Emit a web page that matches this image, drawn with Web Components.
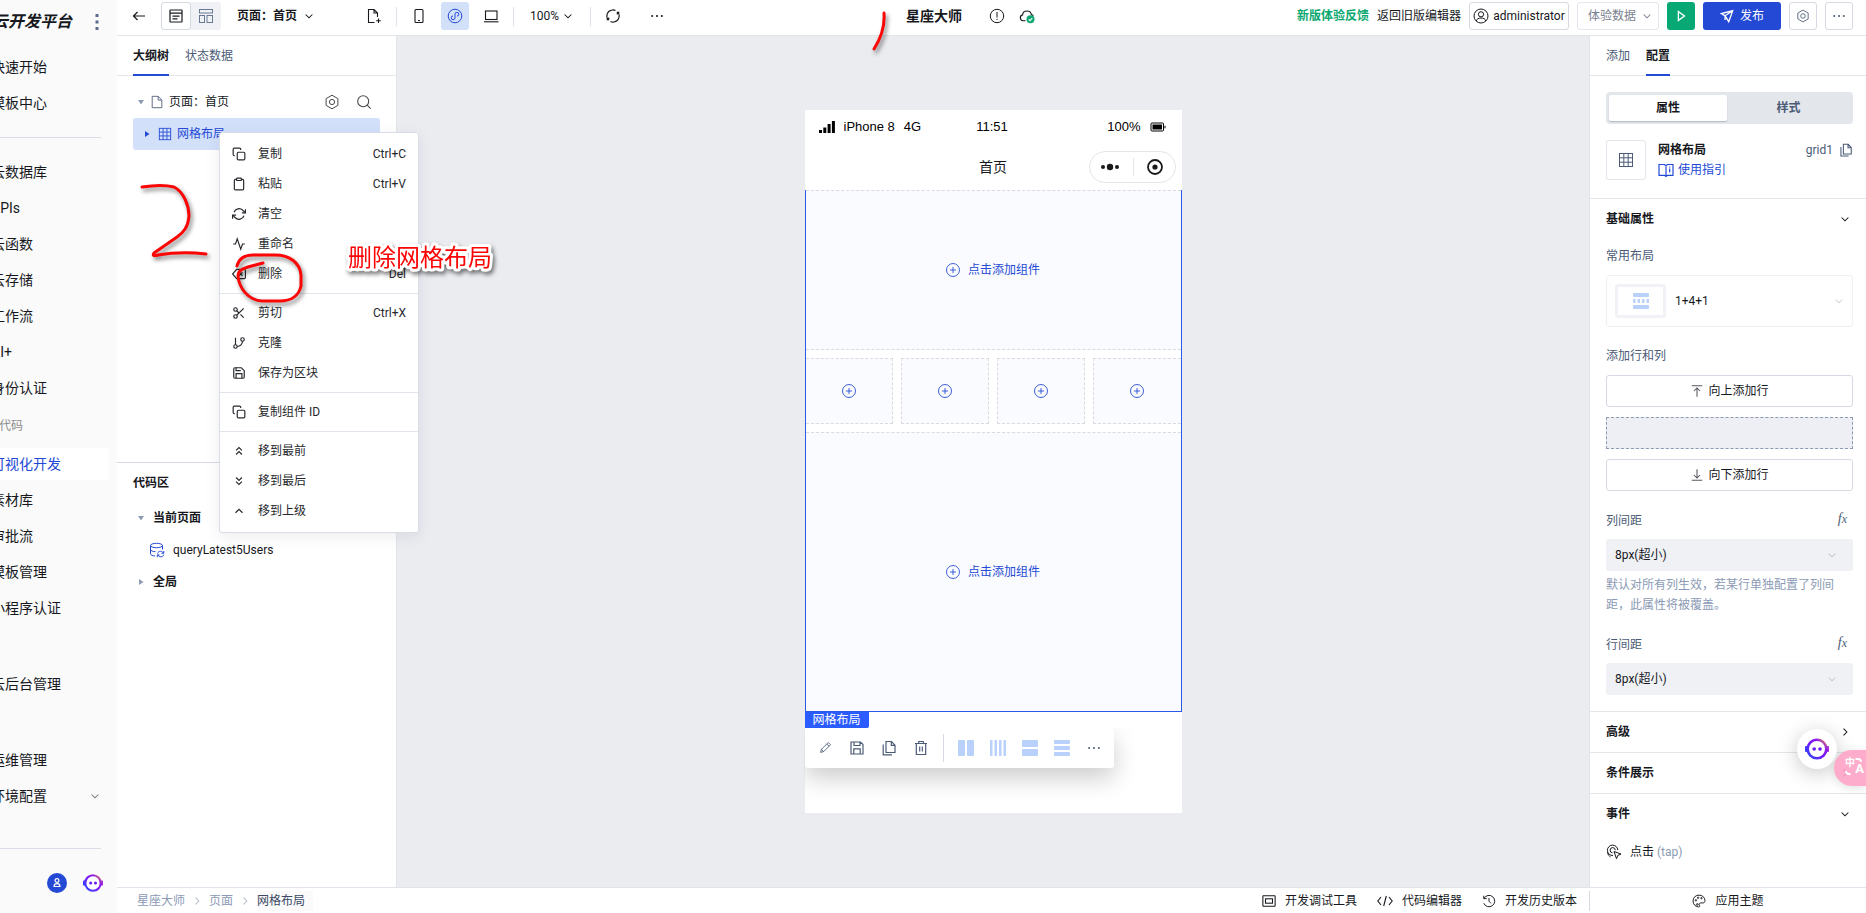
<!DOCTYPE html>
<html lang="zh-CN">
<head>
<meta charset="utf-8">
<title>云开发平台 - 星座大师</title>
<style>
  body { margin: 0; font: 12px/20px Roboto, "Noto Sans CJK SC", sans-serif; color: #16181d; background: #fff; }
</style>
</head>
<body>
<editor-app></editor-app>

<script>
const RESET = `
  * { box-sizing: border-box; }
  button, select { font: inherit; color: inherit; background: none; border: 0; padding: 0; margin: 0; }
  select { appearance: none; outline: 0; }
  a { color: inherit; text-decoration: none; }
  h1, h2, p, ul { margin: 0; padding: 0; font-size: inherit; list-style: none; }
`;

function define(name, css, html) {
  const template = document.createElement('template');
  if (typeof html === 'string') template.innerHTML = `<style>${RESET}${css}</style>${html}`;
  customElements.define(name, class extends HTMLElement {
    constructor() { super(); this.attachShadow({ mode: 'open' }); }
    connectedCallback() {
      if (this.shadowRoot.childNodes.length) return;
      if (typeof html === 'string') this.shadowRoot.append(template.content.cloneNode(true));
      else this.shadowRoot.innerHTML = `<style>${RESET}${css}</style>${html(this)}`;
    }
  });
}

/* Icons: [grid size, stroke width, markup] */
const ICONS = {
  back: [16, 1.2, '<path d="M14 8H2.5M6.5 4 2.5 8l4 4"/>'],
  page: [16, 1.2, '<rect x="2" y="2" width="12" height="12" rx=".5"/><path d="M2 5.2h12M4.500 8.200h7M4.500 10.800h5"/>'],
  blocks: [16, 1, '<rect x="1.5" y="1.5" width="13" height="3.5"/><rect x="1.5" y="7.5" width="5" height="7"/><rect x="9" y="7.5" width="5.5" height="7"/>'],
  down: [16, 1.4, '<path d="m3.5 6 4.5 4.5L12.5 6"/>'],
  right: [16, 1.4, '<path d="m6 3.5 4.5 4.5L6 12.5"/>'],
  fileplus: [16, 1.1, '<path d="M8.500 14.500H2.500V1.500H8l3.500 3.500v4M8 1.500V5h3.500M12.500 10.500v4.500M10.200 12.800h4.600"/>'],
  phone: [16, 1.1, '<rect x="4" y="1.500" width="8" height="13" rx="1"/><path d="M7 12.500h2"/>'],
  mini: [16, 1, '<circle cx="8" cy="8" r="6.800"/><path d="M8 9.800a1.900 1.900 0 1 1-2-1.900M8 9.800V6.200M8 6.200a1.900 1.900 0 1 1 2 1.900"/>'],
  laptop: [16, 1.1, '<rect x="2.500" y="3" width="11.500" height="8.500"/><path d="M1 13.800h14.500"/>'],
  rotate: [16, 1.1, '<path d="M7 2A6.100 6.100 0 0 0 3.300 12M1.500 11.800h2.200V9.500M9 14A6.100 6.100 0 0 0 12.700 4M14.500 4.200h-2.200v2.300M7 2a6 6 0 0 1 3.500.500M9 14a6 6 0 0 1-3.500-.500"/>'],
  dots: [16, 0, '<g fill="currentColor"><rect x="1.500" y="7" width="2" height="2"/><rect x="7" y="7" width="2" height="2"/><rect x="12.500" y="7" width="2" height="2"/></g>'],
  more: [16, 0, '<g fill="currentColor"><rect x="6.500" y="0" width="3" height="3"/><rect x="6.500" y="6.500" width="3" height="3"/><rect x="6.500" y="13" width="3" height="3"/></g>'],
  warn: [16, 1, '<circle cx="8" cy="8" r="6.700"/><path d="M8 4v5.500M8 10.800V12"/>'],
  cloud: [16, 1.1, '<path d="M6.500 12.800H4a3 3 0 0 1-.4-5.900C3.800 4.500 5.600 3 8 3s4 1.500 4.300 3.600c.9.200 1.500.6 2 1.200"/><circle cx="11.500" cy="11.300" r="4" fill="#0aa870" stroke="none"/><path d="m9.700 11.300 1.300 1.300 2.300-2.400" stroke="#fff"/>'],
  user: [16, 1, '<circle cx="8" cy="8" r="7"/><circle cx="8" cy="6.300" r="2.600"/><path d="M3.300 13c.5-2 2-3 4.700-3s4.200 1 4.700 3"/>'],
  play: [16, 1.500, '<path d="M5 3v10l7-5z"/>'],
  send: [16, 1.500, '<path d="M14.500 2 1.500 5.200l4.300 2.600L10 14.500zM14.500 2 5.800 7.800v4.700"/>'],
  hex: [16, 1, '<path d="M8 1.200 13.900 4.600v6.800L8 14.800 2.100 11.400V4.600z"/><circle cx="8" cy="8" r="2.600"/>'],
  search: [16, 1.100, '<circle cx="7.200" cy="7.200" r="5.500"/><path d="m11.200 11.200 3.500 3.500"/>'],
  file: [16, 1, '<path d="M2.500 1.500h6.800l4.200 4.300v8.700h-11zM9.300 1.500v4.300h4.200"/>'],
  tridown: [16, 0, '<path d="M2 4h12l-6 9z" fill="currentColor"/>'],
  triright: [16, 0, '<path d="M4 2v12l9-6z" fill="currentColor"/>'],
  grid: [16, 1, '<rect x="1.500" y="1.500" width="13" height="13"/><path d="M1.500 5.800h13M1.500 10.200h13M5.800 1.500v13M10.200 1.500v13"/>'],
  data: [16, 1, '<ellipse cx="7.500" cy="3.500" rx="6" ry="2.200"/><path d="M1.500 3.500v8.300c0 1.200 2 2 4.500 2.200M13.500 3.500v4M1.500 7.500c0 1.200 2 2.100 5 2.200M8.500 11.500c.5-1.500 1.700-2.200 3-2.200s2.300.6 2.800 1.800M14.800 9v2.300h-2.300M14.800 12.700c-.5 1.400-1.600 2.100-3 2.100s-2.300-.6-2.800-1.800M8.300 15.200v-2.300h2.300"/>'],
  copy: [24, 2, '<rect x="9" y="9" width="13" height="13" rx="2"/><path d="M5 15H4a2 2 0 0 1-2-2V4a2 2 0 0 1 2-2h9a2 2 0 0 1 2 2v1"/>'],
  clip: [24, 2, '<path d="M16 4h2a2 2 0 0 1 2 2v14a2 2 0 0 1-2 2H6a2 2 0 0 1-2-2V6a2 2 0 0 1 2-2h2"/><rect x="8" y="2" width="8" height="4" rx="1"/>'],
  clear: [24, 2, '<path d="M23 4v6h-6M1 20v-6h6"/><path d="M3.500 9a9 9 0 0 1 14.900-3.400L23 10M1 14l4.600 4.400A9 9 0 0 0 20.500 15"/>'],
  pulse: [24, 2, '<path d="M22 12h-4l-3 9L9 3l-3 9H2"/>'],
  erase: [24, 2, '<path d="M21 4H8l-7 8 7 8h13a2 2 0 0 0 2-2V6a2 2 0 0 0-2-2zM18 9l-6 6M12 9l6 6"/>'],
  cut: [24, 2, '<circle cx="6" cy="6" r="3"/><circle cx="6" cy="18" r="3"/><path d="M20 4 8.100 15.900M14.500 14.500 20 20M8.100 8.100 12 12"/>'],
  branch: [24, 2, '<path d="M6 3v12"/><circle cx="18" cy="6" r="3"/><circle cx="6" cy="18" r="3"/><path d="M18 9a9 9 0 0 1-9 9"/>'],
  save: [24, 2, '<path d="M19 21H5a2 2 0 0 1-2-2V5a2 2 0 0 1 2-2h11l5 5v11a2 2 0 0 1-2 2z"/><path d="M17 21v-8H7v8M7 3v5h8"/>'],
  top: [24, 2, '<path d="m17 11-5-5-5 5M17 18l-5-5-5 5"/>'],
  bottom: [24, 2, '<path d="m7 13 5 5 5-5M7 6l5 5 5-5"/>'],
  up: [24, 2, '<path d="m18 15-6-6-6 6"/>'],
  pen: [16, 1, '<path d="m3 13 .9-3.500 7.800-7.800 2.600 2.600-7.800 7.800zM10 3.400 12.600 6M3.900 9.500l2.600 2.600"/>'],
  floppy: [16, 1.200, '<path d="M2 2h9.500L14 4.500V14H2zM5 2v3.500h6V2M4.800 14V8.800h6.400V14"/>'],
  pages: [16, 1.200, '<path d="M5 1.500h5.500l3.500 3.700v7.300H5zM10.300 1.500v3.900H14M2.200 4.500v10.300H11"/>'],
  trash: [16, 1.200, '<path d="M2 3.500h12M5.700 3.500V1.500h4.600v2M3.300 3.500v11h9.400v-11M6.700 6.500v5M9.300 6.500v5"/>'],
  cols2: [16, 0, '<g fill="currentColor"><rect width="7" height="16" rx="1"/><rect x="9" width="7" height="16" rx="1"/></g>'],
  cols4: [16, 0, '<g fill="currentColor"><rect width="2.500" height="16"/><rect x="4.500" width="2.500" height="16"/><rect x="9" width="2.500" height="16"/><rect x="13.500" width="2.500" height="16"/></g>'],
  rows2: [16, 0, '<g fill="currentColor"><rect width="16" height="7" rx="1"/><rect y="9" width="16" height="7" rx="1"/></g>'],
  rows3: [16, 0, '<g fill="currentColor"><rect width="16" height="4" rx="1"/><rect y="6" width="16" height="4" rx="1"/><rect y="12" width="16" height="4" rx="1"/></g>'],
  mixed: [16, 0, '<g fill="currentColor"><rect width="16" height="4" rx="1"/><rect y="6" width="2.500" height="4"/><rect x="4.500" y="6" width="2.500" height="4"/><rect x="9" y="6" width="2.500" height="4"/><rect x="13.500" y="6" width="2.500" height="4"/><rect y="12" width="16" height="4" rx="1"/></g>'],
  plus: [16, 1, '<circle cx="8" cy="8" r="7.400"/><path d="M8 4.500v7M4.500 8h7"/>'],
  signal: [16, 0, '<g fill="#000"><rect y="11" width="3" height="3"/><rect x="4.300" y="8.500" width="3" height="5.500"/><rect x="8.600" y="5" width="3" height="9"/><rect x="12.900" y="2" width="3" height="12"/></g>'],
  battery: [16, 1, '<rect x="1" y="4" width="12.500" height="8" rx="1"/><rect x="2.500" y="5.500" width="9.500" height="5" fill="#000" stroke="none"/><path d="M15 6.800v2.500"/>'],
  beads: [20, 0, '<g fill="#1a1a1a"><circle cx="3" cy="10" r="2"/><circle cx="10" cy="10" r="3.200"/><circle cx="17" cy="10" r="2"/></g>'],
  target: [16, 1.800, '<circle cx="8" cy="8" r="7"/><circle cx="8" cy="8" r="2.600" fill="#1a1a1a" stroke="none"/>'],
  book: [16, 1.200, '<path d="M1 2.500h5.500L8 3.700l1.500-1.200H15v10.800H9.500L8 14.500l-1.500-1.200H1zM8 3.700v10.500M11.700 6.500v4M11.700 4.600v1"/>'],
  addup: [16, 1.200, '<path d="M2 2h12M8 14.500V4.500M4.500 8 8 4.500 11.500 8"/>'],
  adddown: [16, 1.200, '<path d="M2 14h12M8 1.500v10M4.500 8 8 11.500 11.500 8"/>'],
  tap: [16, 1, '<path d="M7 11.500A5.200 5.200 0 1 1 11.800 6M6.500 8.800a2.600 2.600 0 1 1 2.800-2.600M4.500 13a6 6 0 0 1-3-4.800"/><path d="m8 7.500 7 2.600-3.200 1.300-1.300 3.400z"/>'],
  debug: [16, 1.200, '<rect x="1" y="2" width="14" height="12" rx=".5"/><rect x="4" y="5.500" width="8" height="5"/>'],
  code: [16, 1.100, '<path d="M4 4 .8 8 4 12M12 4l3.200 4-3.200 4M9.300 3 6.700 13"/>'],
  history: [16, 1.100, '<path d="M2.300 5A6.500 6.500 0 1 1 2 10.500M2 2v3.300h3.300M8 4.500V8.300l2.300 2.400"/>'],
  palette: [16, 1.100, '<path d="M8 1.300C4 1.300 1.200 4.200 1.200 8S4.200 14.800 7.500 14.800c1.500 0 1.600-1.200 1-2-.8-1.300 0-2.600 1.400-2.600h2.400c1.700 0 2.500-1 2.500-2.700C14.800 4 12 1.300 8 1.300z"/><circle cx="4.500" cy="7.200" r=".8"/><circle cx="7" cy="4.300" r=".8"/><circle cx="10.800" cy="4.800" r=".8"/><circle cx="6" cy="12" r="1"/>'],
  person: [20, 1.200, '<circle cx="10" cy="10" r="10" fill="#2349d5" stroke="none"/><g stroke="#fff"><circle cx="10" cy="7.500" r="1.900"/><path d="M7 13.500c0-2 1-2.800 3-2.800s3 .8 3 2.800z"/></g>'],
  bot: [24, 0, '<defs><linearGradient id="g" x1="0" y1="1" x2="1" y2="0"><stop offset="0" stop-color="#2a4dff"/><stop offset=".5" stop-color="#7a12f5"/><stop offset=".75" stop-color="#8a1ee8"/><stop offset="1" stop-color="#ff9a3c"/></linearGradient></defs><rect x="0" y="9" width="4" height="6" rx="1" fill="#3a3cff"/><rect x="20" y="9" width="4" height="6" rx="1" fill="#a52ad8"/><circle cx="12" cy="12" r="9.300" fill="#fff" stroke="url(#g)" stroke-width="2.600"/><circle cx="9.200" cy="12" r="1.800" fill="#6a1af5"/><circle cx="15" cy="12" r="1.800" fill="#6a1af5"/>'],
  swap: [20, 1.800, '<path d="M12.500 2h2.500a3 3 0 0 1 3 3M3 14a3 3 0 0 0 3 3h1.500"/>'],
};

define('app-icon', `
  :host { display: inline-flex; flex: none; width: 16px; height: 16px; }
  :host([size="8"]) { width: 8px; height: 8px; }
  :host([size="10"]) { width: 10px; height: 10px; }
  :host([size="12"]) { width: 12px; height: 12px; }
  :host([size="14"]) { width: 14px; height: 14px; }
  :host([size="20"]) { width: 20px; height: 20px; }
  :host([size="24"]) { width: 24px; height: 24px; }
  svg { width: 100%; height: 100%; display: block; overflow: visible; }
`, el => {
  const [box, width, body] = ICONS[el.getAttribute('name')];
  return `<svg viewBox="0 0 ${box} ${box}" fill="none" stroke="${width ? 'currentColor' : 'none'}" stroke-width="${width}" aria-hidden="true">${body}</svg>`;
});

/* Global product navigation on the far left, scrolled sideways */
define('nav-item', `
  :host { display: block; padding: 2px 8px 2px 0; }
  a { display: flex; align-items: center; justify-content: space-between; height: 32px; padding: 0 8px 0 24px; font-size: 14px; white-space: nowrap; }
  :host([active]) a { background: #fff; color: #2349d5; border-radius: 2px; }
  app-icon { color: #777; }
`, el => `<a href="#"><slot></slot>${el.hasAttribute('expandable') ? '<app-icon name="down" size="12"></app-icon>' : ''}</a>`);

define('side-nav', `
  :host { display: block; flex: none; width: 117px; overflow: hidden; background: #fafafa; }
  nav { display: flex; flex-direction: column; min-height: 100%; width: 150px; margin-left: -33px; }
  header { display: flex; align-items: center; justify-content: space-between; height: 44px; margin-bottom: 5px; padding: 0 12px 0 25px; }
  h1 { font-size: 16px; font-style: italic; font-weight: 700; white-space: nowrap; }
  header app-icon { color: #5b6b8c; }
  hr { margin: 16px 16px 16px 0; border: 0; height: 1px; background: #d9dde6; flex: none; width: 134px; }
  .caption { height: 40px; line-height: 40px; padding-left: 20px; color: #8b8b8b; }
  .group { margin-top: 40px; }
  footer { margin-top: auto; }
  footer hr { margin: 0; }
  footer div { display: flex; justify-content: flex-end; align-items: center; gap: 16px; height: 64px; padding: 4px 14px 0 0; }
`, `
  <nav>
    <header><h1>云开发平台</h1><app-icon name="more"></app-icon></header>
    <nav-item>快速开始</nav-item><nav-item>模板中心</nav-item>
    <hr>
    <nav-item>云数据库</nav-item><nav-item>APIs</nav-item><nav-item>云函数</nav-item><nav-item>云存储</nav-item>
    <nav-item>工作流</nav-item><nav-item>AI+</nav-item><nav-item>身份认证</nav-item>
    <div class="caption">低代码</div>
    <nav-item active>可视化开发</nav-item><nav-item>素材库</nav-item><nav-item>审批流</nav-item>
    <nav-item>模板管理</nav-item><nav-item>小程序认证</nav-item>
    <div class="group"><nav-item>云后台管理</nav-item></div>
    <div class="group"><nav-item>运维管理</nav-item><nav-item expandable>环境配置</nav-item></div>
    <footer><hr><div><app-icon name="person" size="20"></app-icon><app-icon name="bot" size="20"></app-icon></div></footer>
  </nav>
`);

define('tool-button', `
  :host { display: block; flex: none; }
  button { display: flex; align-items: center; justify-content: center; gap: 4px; width: 28px; height: 28px; border-radius: 3px; }
  :host([kind="outline"]) button { border: 1px solid #d5dae3; color: #4b5b76; }
  :host([kind="active"]) button { background: #d3e0fa; color: #2349d5; }
  :host([kind="run"]) button { background: #07a873; color: #fff; }
  :host([kind="primary"]) button { width: 78px; background: #2349d5; color: #fff; gap: 6px; }
  :host([kind="user"]) button { width: 100px; border: 1px solid #d5dae3; }
`, `<button type="button"><slot></slot></button>`);

define('pick-list', `
  :host { display: flex; align-items: center; gap: 2px; flex: none; }
  select { line-height: 20px; }
  :host([bold]) select { font-weight: 700; }
  :host([bold]) { gap: 5px; }
  :host([boxed]) { gap: 4px; height: 28px; width: 82px; padding: 0 5px 0 10px; border: 1px solid #e3e6ec; border-radius: 3px; color: #7a8191; }
`, el => `<select aria-label="${el.getAttribute('label')}"><option>${el.getAttribute('value')}</option></select><app-icon name="down" size="12"></app-icon>`);

define('top-bar', `
  :host { display: flex; height: 36px; border-bottom: 1px solid #e3e6eb; padding: 2px 13px 5px 10px; background: #fff; }
  div { display: flex; align-items: center; }
  .left, .right { flex: 1 1 0; }
  .right { justify-content: flex-end; gap: 8px; white-space: nowrap; }
  .center { min-width: 168px; }
  .center h1 { font-size: 14px; font-weight: 700; margin-right: 27px; }
  .center app-icon { margin-right: 14px; }
  .views { width: 60px; height: 28px; background: #f0f1f5; border-radius: 3px; margin: 0 16px 0 10px; color: #6b7a94; }
  .views button { display: flex; align-items: center; justify-content: center; width: 30px; height: 28px; border-radius: 3px; }
  .views button:first-child { background: #fff; border: 1px solid #d5dae3; color: #16181d; }
  .back { width: 24px; display: flex; justify-content: center; }
  i { width: 1px; height: 19px; background: #dfe2e8; margin: 0 8px; }
  .page { margin-right: 45px; }
  .devices { gap: 8px; }
  .zoom { margin: 0 8px; }
  .spin { margin-right: 16px; }
  .feedback { color: #0aa870; font-weight: 700; }
`, `
  <div class="left">
    <button class="back" aria-label="返回"><app-icon name="back"></app-icon></button>
    <div class="views"><button aria-label="页面"><app-icon name="page"></app-icon></button><button aria-label="布局"><app-icon name="blocks"></app-icon></button></div>
    <pick-list class="page" bold label="页面" value="页面：首页"></pick-list>
    <tool-button><app-icon name="fileplus"></app-icon></tool-button><i></i>
    <div class="devices">
      <tool-button><app-icon name="phone"></app-icon></tool-button>
      <tool-button kind="active"><app-icon name="mini"></app-icon></tool-button>
      <tool-button><app-icon name="laptop"></app-icon></tool-button>
    </div><i></i>
    <pick-list class="zoom" label="缩放" value="100%"></pick-list><i></i>
    <tool-button class="spin"><app-icon name="rotate"></app-icon></tool-button>
    <tool-button><app-icon name="dots" size="14"></app-icon></tool-button>
  </div>
  <div class="center"><h1>星座大师</h1><app-icon name="warn"></app-icon><app-icon name="cloud"></app-icon></div>
  <div class="right">
    <a class="feedback" href="#">新版体验反馈</a><a href="#">返回旧版编辑器</a>
    <tool-button kind="user"><app-icon name="user"></app-icon>administrator</tool-button>
    <pick-list boxed label="体验数据" value="体验数据"></pick-list>
    <tool-button kind="run"><app-icon name="play" size="14"></app-icon></tool-button>
    <tool-button kind="primary"><app-icon name="send" size="14"></app-icon>发布</tool-button>
    <tool-button kind="outline"><app-icon name="hex" size="14"></app-icon></tool-button>
    <tool-button kind="outline"><app-icon name="dots" size="14"></app-icon></tool-button>
  </div>
`);

define('tab-strip', `
  :host { display: flex; gap: 16px; height: 40px; padding: 0 16px; border-bottom: 1px solid #e3e6eb; color: #4b5b76; }
  button { height: 40px; padding-top: 2px; border-bottom: 2px solid transparent; }
  button[aria-selected="true"] { border-color: #2349d5; color: #16181d; font-weight: 700; }
`, el => el.getAttribute('tabs').split(',').map((t, i) =>
  `<button role="tab" aria-selected="${String(i) === el.getAttribute('current')}">${t}</button>`).join(''));

define('outline-panel', `
  :host { display: flex; flex-direction: column; flex: none; width: 280px; background: #fff; border-right: 1px solid #e1e4ea; }
  .tree { flex: none; height: 386px; padding: 10px 16px; }
  .row { display: flex; align-items: center; height: 32px; border-radius: 3px; }
  .row app-icon { margin-right: 5px; }
  .row .tri { color: #8c9ab5; margin: 0 5px 0 4px; }
  .row .file { color: #4b5b76; }
  .row.selected { background: #d3e0fa; color: #2349d5; }
  .row.selected .tri { color: #2349d5; margin: 0 7px 0 10px; }
  .tools { margin-left: auto; display: flex; gap: 16px; padding-right: 8px; color: #4a4a4a; }
  .tools app-icon { margin: 0; }
  .code { border-top: 1px solid #d5dae3; padding: 10px 16px; }
  h2 { height: 20px; margin-bottom: 9px; }
  .code .row { height: 32px; font-weight: 700; }
  .code .row .tri { margin-right: 8px; }
  .code .query { padding-left: 16px; font-weight: 400; }
  .query app-icon { color: #2349d5; margin-right: 8px; }
`, `
  <tab-strip tabs="大纲树,状态数据" current="0"></tab-strip>
  <div class="tree">
    <div class="row"><app-icon class="tri" name="tridown" size="8"></app-icon><app-icon class="file" name="file" size="14"></app-icon>页面：首页
      <span class="tools"><app-icon name="hex"></app-icon><app-icon name="search"></app-icon></span></div>
    <div class="row selected"><app-icon class="tri" name="triright" size="8"></app-icon><app-icon name="grid" size="14"></app-icon>网格布局</div>
  </div>
  <section class="code">
    <h2>代码区</h2>
    <div class="row"><app-icon class="tri" name="tridown" size="8"></app-icon><span>当前页面</span></div>
    <div class="row query"><app-icon name="data"></app-icon><span>queryLatest5Users</span></div>
    <div class="row"><app-icon class="tri" name="triright" size="8"></app-icon><span>全局</span></div>
  </section>
`);

define('menu-item', `
  :host { display: block; }
  button { display: flex; align-items: center; width: 100%; height: 30px; padding: 0 12px; color: #26282c; }
  app-icon { margin-right: 12px; }
  span { margin-left: auto; }
`, el => `<button role="menuitem"><app-icon name="${el.getAttribute('icon')}" size="14"></app-icon><slot></slot><span>${el.getAttribute('keys') || ''}</span></button>`);

define('context-menu', `
  :host { display: block; position: absolute; left: 219px; top: 132px; width: 200px; padding: 6px 0; box-sizing: border-box; background: #fff; border: 1px solid #d9dde6; border-radius: 3px; box-shadow: 0 4px 16px rgba(20, 30, 60, .08); }
  hr { margin: 4px 0; border: 0; height: 1px; background: #e1e4ea; }
`, `
  <div role="menu">
    <menu-item icon="copy" keys="Ctrl+C">复制</menu-item>
    <menu-item icon="clip" keys="Ctrl+V">粘贴</menu-item>
    <menu-item icon="clear">清空</menu-item>
    <menu-item icon="pulse">重命名</menu-item>
    <menu-item icon="erase" keys="Del">删除</menu-item>
    <hr>
    <menu-item icon="cut" keys="Ctrl+X">剪切</menu-item>
    <menu-item icon="branch">克隆</menu-item>
    <menu-item icon="save">保存为区块</menu-item>
    <hr>
    <menu-item icon="copy">复制组件 ID</menu-item>
    <hr>
    <menu-item icon="top">移到最前</menu-item>
    <menu-item icon="bottom">移到最后</menu-item>
    <menu-item icon="up">移到上级</menu-item>
  </div>
`);

define('slot-cell', `
  :host { display: flex; border: 1px dashed #d9dbe0; background: #fafbfe; }
  :host([wide]) { border-width: 1px 0; }
  :host([last]) { border-width: 1px 0 0; }
  :host([start]) { border-left: 0; }
  :host([end]) { border-right: 0; }
  button { flex: 1; display: flex; align-items: center; justify-content: center; gap: 8px; color: #2349d5; }
`, `<button type="button" aria-label="添加组件"><app-icon name="plus" size="14"></app-icon><slot></slot></button>`);

define('phone-preview', `
  :host { display: block; width: 377px; min-height: 703px; background: #fff; }
  .status { display: grid; grid-template-columns: 1fr auto 1fr; align-items: center; height: 34px; padding: 0 16px 0 14px; font: 13px/20px "Liberation Sans", sans-serif; color: #000; }
  .status div { display: flex; align-items: center; gap: 9px; }
  .status div:last-child { justify-content: flex-end; }
  .title { display: grid; grid-template-columns: 1fr auto 1fr; align-items: center; height: 46px; font-size: 14px; padding: 0 6px; }
  .capsule { justify-self: end; display: flex; align-items: center; justify-content: space-between; width: 87px; height: 32px; padding: 0 12px 0 10px; border: 1px solid #e4e5ea; border-radius: 16px; color: #1a1a1a; }
  .capsule i { width: 1px; height: 18px; background: #e4e5ea; }
  .grid { display: grid; grid-template-columns: repeat(4, 1fr); grid-template-rows: 160px 66px 1fr; gap: 8px; height: 522px; border: solid #2a5ae8; border-width: 0 1px 1px; }
  .grid [wide], .grid [last] { grid-column: 1 / -1; }
  .label { width: 64px; height: 16px; line-height: 16px; text-align: center; background: #2b5cff; color: #fff; border-radius: 0 0 2px 0; }
  .bar { display: flex; align-items: center; width: 309px; height: 40px; padding: 0 4px; background: #fff; border-radius: 3px; box-shadow: 0 10px 24px rgba(0, 0, 0, .2); color: #4b5b76; clip-path: inset(0 -40px -45px 0); }
  .bar button { width: 32px; height: 32px; display: flex; align-items: center; justify-content: center; }
  .bar i { width: 1px; height: 28px; background: #d5dae3; margin: 0 6px; }
  .light { color: #b9d1fb; }
`, `
  <div class="status"><div><app-icon name="signal"></app-icon>iPhone 8 <span>4G</span></div><span>11:51</span><div>100%<app-icon name="battery"></app-icon></div></div>
  <div class="title"><span></span><span>首页</span><div class="capsule"><app-icon name="beads" size="20"></app-icon><i></i><app-icon name="target"></app-icon></div></div>
  <div class="grid">
    <slot-cell wide>点击添加组件</slot-cell>
    <slot-cell start></slot-cell><slot-cell></slot-cell><slot-cell></slot-cell><slot-cell end></slot-cell>
    <slot-cell last>点击添加组件</slot-cell>
  </div>
  <div class="label">网格布局</div>
  <div class="bar">
    <button aria-label="编辑"><app-icon name="pen" size="14"></app-icon></button>
    <button aria-label="保存"><app-icon name="floppy"></app-icon></button>
    <button aria-label="复制"><app-icon name="pages"></app-icon></button>
    <button aria-label="删除"><app-icon name="trash"></app-icon></button>
    <i></i>
    <button class="light" aria-label="两列"><app-icon name="cols2"></app-icon></button>
    <button class="light" aria-label="四列"><app-icon name="cols4"></app-icon></button>
    <button class="light" aria-label="两行"><app-icon name="rows2"></app-icon></button>
    <button class="light" aria-label="三行"><app-icon name="rows3"></app-icon></button>
    <button aria-label="更多"><app-icon name="dots" size="14"></app-icon></button>
  </div>
`);

define('gap-field', `
  :host { display: block; }
  .head { display: flex; align-items: flex-start; justify-content: space-between; height: 28px; color: #4b5b76; padding-right: 6px; }
  .fx { font: italic 14px/16px "Liberation Serif", serif; }
  .fx small { font-size: 12px; }
  .box { display: flex; align-items: center; height: 32px; padding: 0 15px 0 9px; background: #f0f1f5; border-radius: 3px; }
  select { flex: 1; opacity: 1; }
  app-icon { color: #c3c8d2; }
`, el => `
  <div class="head"><label for="gap">${el.getAttribute('label')}</label><button class="fx" aria-label="表达式">f<small>x</small></button></div>
  <div class="box"><select id="gap"><option>8px(超小)</option></select><app-icon name="down" size="12"></app-icon></div>
`);

define('fold-head', `
  :host { display: block; border-top: 1px solid #e3e6eb; }
  button { display: flex; align-items: center; justify-content: space-between; width: 100%; height: 40px; padding: 0 15px 0 16px; font-weight: 700; }
`, el => `<button type="button"><slot></slot><app-icon name="${el.hasAttribute('open') ? 'down' : 'right'}" size="12"></app-icon></button>`);

define('config-panel', `
  :host { display: block; flex: none; width: 277px; background: #fff; border-left: 1px solid #e1e4ea; }
  .body { padding: 0 13px 0 16px; }
  .segment { display: flex; height: 32px; padding: 3px; margin: 16px 0; background: #e3e6eb; border-radius: 4px; color: #4b5b76; }
  .segment button { flex: 1; font-weight: 700; border-radius: 2px; }
  .segment button:first-child { flex: none; width: 118px; background: #fff; color: #16181d; box-shadow: 0 1px 1px rgba(30, 50, 90, .25); }
  .component { display: flex; gap: 12px; height: 58px; }
  .thumb { display: flex; align-items: center; justify-content: center; width: 40px; height: 40px; border: 1px solid #e1e4ea; border-radius: 3px; color: #4b5b76; }
  .names { flex: 1; }
  .names a { display: flex; align-items: center; gap: 4px; color: #2349d5; }
  .id { display: flex; gap: 6px; color: #4b5b76; height: 20px; align-items: center; }
  .caption { color: #4b5b76; height: 20px; margin: 7px 0 9px; display: block; }
  .layout { display: flex; align-items: center; gap: 9px; height: 52px; padding: 0 7px 0 8px; margin-bottom: 19px; border: 1px solid #eff0f4; border-radius: 3px; }
  .layout .thumb { width: 51px; height: 34px; border: 3px solid #f1f2f6; color: #b9d1fb; }
  .layout select { flex: 1; }
  .layout > app-icon { color: #cdd1d9; }
  .add { display: flex; align-items: center; justify-content: center; gap: 4px; width: 100%; height: 32px; border: 1px solid #d5dae3; border-radius: 3px; }
  .add app-icon { color: #55585e; }
  .drop { height: 32px; margin: 10px 0; border: 1px dashed #8c9ab5; background: #eeeff4; }
  gap-field { margin-top: 20px; }
  .hint { color: #8c9ab5; padding: 4px 0; }
  .hint + gap-field { margin-top: 16px; }
  gap-field:last-child { margin-bottom: 16px; }
  .event { display: flex; align-items: center; gap: 8px; padding: 8px 16px; height: 36px; }
  .event small { font-size: 12px; color: #8c9ab5; }
`, `
  <tab-strip tabs="添加,配置" current="1"></tab-strip>
  <div class="body">
    <div class="segment"><button type="button">属性</button><button type="button">样式</button></div>
    <div class="component">
      <div class="thumb"><app-icon name="grid"></app-icon></div>
      <div class="names"><b>网格布局</b><a href="#"><app-icon name="book"></app-icon>使用指引</a></div>
      <div class="id">grid1<app-icon name="pages" size="14"></app-icon></div>
    </div>
  </div>
  <fold-head open>基础属性</fold-head>
  <div class="body">
    <label class="caption" for="layout">常用布局</label>
    <div class="layout"><span class="thumb"><app-icon name="mixed"></app-icon></span><select id="layout"><option>1+4+1</option></select><app-icon name="down" size="12"></app-icon></div>
    <span class="caption">添加行和列</span>
    <button class="add" type="button"><app-icon name="addup" size="14"></app-icon>向上添加行</button>
    <div class="drop"></div>
    <button class="add" type="button"><app-icon name="adddown" size="14"></app-icon>向下添加行</button>
    <gap-field label="列间距"></gap-field>
    <p class="hint">默认对所有列生效，若某行单独配置了列间距，此属性将被覆盖。</p>
    <gap-field label="行间距"></gap-field>
  </div>
  <fold-head>高级</fold-head>
  <fold-head>条件展示</fold-head>
  <fold-head open>事件</fold-head>
  <div class="event"><app-icon name="tap"></app-icon><span>点击 <small>(tap)</small></span></div>
`);

define('status-bar', `
  :host { display: flex; height: 26px; border-top: 1px solid #e1e4ea; background: #fff; }
  nav { flex: 1; display: flex; align-items: center; gap: 6px; padding-left: 20px; color: #8c9ab5; }
  nav app-icon { color: #b7bfce; }
  nav a:last-child { color: #3b4964; background: #fafafa; padding: 0 8px 0 0; }
  .tools { display: flex; align-items: center; gap: 20px; padding-right: 12px; }
  button { display: flex; align-items: center; gap: 9px; }
  .theme { width: 277px; margin: 3px 0 2px; border-left: 1px solid #d5dae3; display: flex; justify-content: center; }
`, `
  <nav><a href="#">星座大师</a><app-icon name="right" size="12"></app-icon><a href="#">页面</a><app-icon name="right" size="12"></app-icon><a href="#">网格布局</a></nav>
  <div class="tools">
    <button><app-icon name="debug" size="14"></app-icon>开发调试工具</button>
    <button><app-icon name="code"></app-icon>代码编辑器</button>
    <button><app-icon name="history" size="14"></app-icon>开发历史版本</button>
  </div>
  <div class="theme"><button><app-icon name="palette" size="14"></app-icon>应用主题</button></div>
`);

/* Round assistant button and the translation tab that float over the right edge */
define('floating-helpers', `
  :host { display: block; position: absolute; right: 0; top: 729px; width: 69px; height: 60px; }
  button { position: absolute; }
  .bot { left: 0; top: 0; width: 40px; height: 40px; border-radius: 50%; background: #fff; box-shadow: 0 4px 20px rgba(0, 0, 0, .22); display: flex; align-items: center; justify-content: center; }
  .translate { right: 0; top: 21px; width: 32px; height: 36px; border-radius: 18px 0 0 18px; background: rgba(253, 164, 197, .9); color: #fff; font: 700 10px/12px Roboto, "Noto Sans CJK SC", sans-serif; box-shadow: 0 2px 10px rgba(0, 0, 0, .12); display: grid; grid-template-columns: 9px 11px; align-content: start; padding: 7px 0 0 11px; }
  .translate span:last-of-type { font-size: 13px; padding-top: 6px; }
  .translate app-icon { position: absolute; left: 9px; top: 7px; }
`, `
  <button class="bot" aria-label="助手"><app-icon name="bot" size="24"></app-icon></button>
  <button class="translate"><span>中</span><span>A</span><app-icon name="swap" size="20"></app-icon></button>
`);

/* Hand-drawn red marks of the tutorial */
define('marker-layer', `
  :host { display: block; position: absolute; left: 0; top: 0; pointer-events: none; }
  svg { display: block; filter: drop-shadow(2px 3px 2px rgba(0, 0, 0, .5)); }
  path { fill: none; stroke: #fb0505; stroke-width: 3; stroke-linecap: round; stroke-linejoin: round; }
  text { font: 24px "Noto Sans CJK SC", sans-serif; fill: #fb0505; stroke: #fff; stroke-width: 6; stroke-linejoin: round; paint-order: stroke; }
`, `
  <svg width="920" height="320">
    <path d="M884 13C885 26 881 38 874 49"/>
    <path d="M142 187C155 185 166 185 174 187C184 192 189 206 189 216C188 227 184 232 177 237L154 253C152 256 154 256 158 255C175 252 190 252 206 254"/>
    <path d="M237 266C239 258 244 255 253 255L275 255C290 255 300 263 301 275L301 286C299 295 292 301 280 301L262 301C248 300 239 288 238 276C238 268 248 267 263 263"/>
    <text x="348" y="266">删除网格布局</text>
  </svg>
`);

define('editor-app', `
  :host { display: flex; position: relative; min-height: 100vh; overflow: hidden; }
  .editor { flex: 1; min-width: 0; display: flex; flex-direction: column; }
  .work { flex: 1; display: flex; }
  main { flex: 1; min-width: 0; display: flex; align-items: center; justify-content: center; background: #ebecf0; }
`, `
  <side-nav></side-nav>
  <div class="editor">
    <top-bar></top-bar>
    <div class="work"><outline-panel></outline-panel><main><phone-preview></phone-preview></main><config-panel></config-panel></div>
    <status-bar></status-bar>
  </div>
  <context-menu></context-menu>
  <floating-helpers></floating-helpers>
  <marker-layer></marker-layer>
`);
</script>
</body>
</html>
